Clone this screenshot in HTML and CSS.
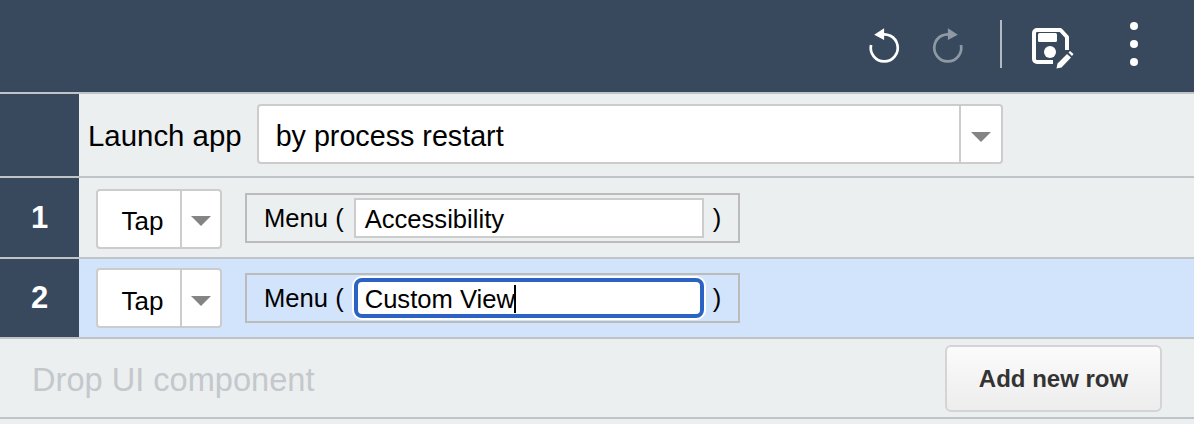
FILE: index.html
```html
<!DOCTYPE html>
<html lang="en">
<head>
    <meta charset="UTF-8">
    <title>Test editor</title>
    <link rel="stylesheet" href="styles.css">
</head>
<body>
<div class="toolbar">
    <svg class="icon undo" viewBox="0 0 40 40"><path d="M13 9.500A15 15 0 1 1 4.500 20" fill="none" stroke="#fff" stroke-width="3"/><path d="M19 1.500 8 8.500 19 14.500Z" fill="#fff"/></svg>
    <svg class="icon redo" viewBox="0 0 40 40"><path d="M27 9.500A15 15 0 1 0 35.500 20" fill="none" stroke="#8f99a6" stroke-width="3"/><path d="M21 1.500 32 8.500 21 14.500Z" fill="#8f99a6"/></svg>
    <div class="divider"></div>
    <svg class="icon save" viewBox="0 0 42 42"><path d="M21 34H5a3 3 0 0 1-3-3V5a3 3 0 0 1 3-3h23.500L35 9v13" fill="none" stroke="#fff" stroke-width="4" stroke-linejoin="round"/><rect x="6" y="5" width="19" height="9" rx="1.500" fill="#fff"/><circle cx="18" cy="24" r="6" fill="#fff"/><path d="M24.500 40.500l1-5L35 26l4 3.500L29.500 39.500ZM36.500 24.500l1.500-1.500 3.500 3-1.500 2Z" fill="#fff"/></svg>
    <div class="more"><span></span><span></span><span></span></div>
</div>

<div class="row launch">
    <div class="num"></div>
    <div class="cell">
        <span class="launch-label">Launch app</span>
        <div class="select select-wide">
            <span class="select-value">by process restart</span>
            <span class="select-arrow"><i></i></span>
        </div>
    </div>
</div>

<div class="row step">
    <div class="num">1</div>
    <div class="cell">
        <div class="select select-tap">
            <span class="select-value">Tap</span>
            <span class="select-arrow"><i></i></span>
        </div>
        <div class="param">
            <span>Menu (</span>
            <div class="param-input">Accessibility</div>
            <span>)</span>
        </div>
    </div>
</div>

<div class="row step selected">
    <div class="num">2</div>
    <div class="cell">
        <div class="select select-tap">
            <span class="select-value">Tap</span>
            <span class="select-arrow"><i></i></span>
        </div>
        <div class="param">
            <span>Menu (</span>
            <div class="param-input focused">Custom View<b class="caret"></b></div>
            <span>)</span>
        </div>
    </div>
</div>

<div class="footer">
    <span class="drop">Drop UI component</span>
    <button type="button" class="add-btn">Add new row</button>
</div>
</body>
</html>
```

FILE: styles.css
```css
html, body { margin: 0; padding: 0; }
body { font-family: "Liberation Sans", Arial, sans-serif; background: #ebeff0; color: #000; height: 424px; overflow: hidden; }

.toolbar { height: 92px; background: #38495e; border-bottom: 2px solid #c0c4c8; display: flex; align-items: center; }
.icon { display: block; flex: none; }
.undo { width: 36px; height: 36px; margin-left: 867px; margin-top: -2px; }
.redo { width: 36px; height: 36px; margin-left: 26px; margin-top: -2px; }
.divider { width: 2px; height: 48px; background: #b4bac1; margin-left: 35px; margin-top: -4px; }
.save { width: 42px; height: 42px; margin-left: 30px; margin-top: 6px; }
.more { display: flex; flex-direction: column; gap: 10px; margin-left: 56px; margin-top: -4px; }
.more span { width: 8px; height: 8px; border-radius: 50%; background: #fff; }

.row { display: flex; border-bottom: 2px solid #c0c4c8; }
.launch { height: 82px; }
.step { height: 79px; }
.step.selected { height: 78px; }
.num { width: 79px; flex: none; background: #38495e; color: #fff; font-size: 31px; font-weight: bold; display: flex; align-items: center; justify-content: center; }
.cell { flex: 1; display: flex; align-items: center; }
.selected .cell { background: #d2e3fc; }

.launch-label { font-size: 29.400px; margin-left: 9px; padding-top: 2px; }
.select { display: flex; background: #fff; border: 2px solid #ccc; border-radius: 4px; box-sizing: border-box; }
.select-value { flex: 1; font-size: 26px; display: flex; align-items: center; }
.select-arrow { width: 40px; border-left: 2px solid #ccc; display: flex; align-items: center; justify-content: center; padding-top: 5px; }
.select-arrow i { width: 0; height: 0; border-left: 10px solid transparent; border-right: 10px solid transparent; border-top: 10px solid #848484; }
.select-wide { width: 746px; height: 60px; margin-left: 15px; margin-top: -2px; }
.select-wide .select-value { padding-left: 17px; padding-top: 4px; font-size: 28.700px; }
.select-tap { width: 126px; height: 60px; margin-left: 17px; margin-top: 2px; }
.selected .select-tap { margin-top: 0; }
.select-tap .select-value { justify-content: center; padding-left: 7px; padding-top: 6px; }
.select-tap .select-arrow { width: 38px; }

.param { display: flex; align-items: center; height: 50px; width: 495px; box-sizing: border-box; margin-left: 23px; margin-top: 1px; border: 2px solid #bbb; padding-left: 17px; padding-top: 1px; font-size: 25.600px; }
.selected .param { margin-top: 0; }
.param-input { width: 350px; height: 40px; box-sizing: border-box; background: #fff; border: 2px solid #ccc; margin: -1px 9px 0 10px; padding-left: 9px; padding-top: 2px; display: flex; align-items: center; }
.param-input.focused { border: 4px solid #2b63c4; border-radius: 8px; padding-left: 7px; box-shadow: 0 0 0 2px #fff; }
.caret { display: inline-block; width: 2px; height: 28px; background: #000; margin-left: -1px; }

.footer { height: 78px; border-bottom: 2px solid #c0c4c8; display: flex; align-items: center; justify-content: space-between; }
.drop { font-size: 32.600px; color: #c4c8cc; margin-left: 32px; padding-top: 4px; }
.add-btn { width: 217px; height: 67px; margin-right: 32px; border: 2px solid #d4d4d4; border-radius: 6px; background: linear-gradient(#fbfbfb, #ededed); font-family: inherit; font-size: 24px; font-weight: bold; color: #333; padding: 1px 0 0; }
```
